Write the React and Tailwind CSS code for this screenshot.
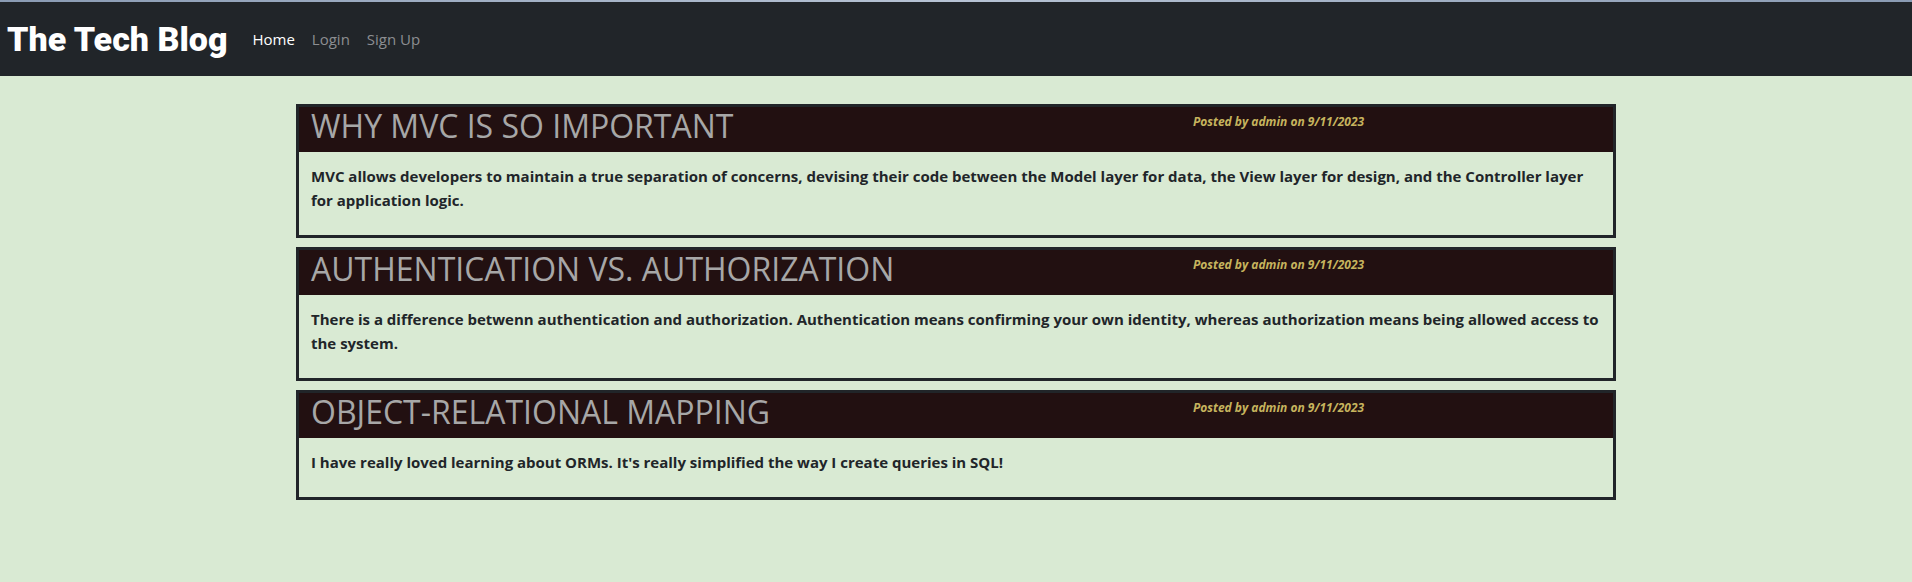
const posts = [
  {
    title: "WHY MVC IS SO IMPORTANT",
    body: "MVC allows developers to maintain a true separation of concerns, devising their code between the Model layer for data, the View layer for design, and the Controller layer for application logic.",
  },
  {
    title: "AUTHENTICATION VS. AUTHORIZATION",
    body: "There is a difference betwenn authentication and authorization. Authentication means confirming your own identity, whereas authorization means being allowed access to the system.",
  },
  {
    title: "OBJECT-RELATIONAL MAPPING",
    body: "I have really loved learning about ORMs. It's really simplified the way I create queries in SQL!",
  },
];

function PostCard({ title, body }) {
  return (
    <div className="border-[3px] border-[#212529] bg-[#d9ead3]">
      {/* Header */}
      <div className="flex items-start h-[45px] bg-[#221011]">
        <h2 className="w-[894px] px-3 text-[32px] leading-[38px] font-normal text-[#a7a7a7] font-['Open_Sans',sans-serif]">
          {title}
        </h2>
        <p className="pt-[6px] text-[12px] leading-[18px] font-bold italic text-[#c6b45e] font-['Open_Sans',sans-serif]">
          Posted by admin on 9/11/2023
        </p>
      </div>

      {/* Body */}
      <div className="px-3 pt-3 pb-[23px]">
        <p className="text-[15px] leading-6 font-bold text-[#212529] font-['Open_Sans',sans-serif]">
          {body}
        </p>
      </div>
    </div>
  );
}

export default function App() {
  return (
    <div className="min-h-[582px] bg-[#d9ead3]">
      <div className="h-[2px] bg-gradient-to-r from-[#8a9bb3] via-[#b7c3d4] to-[#8a9bb3]" />
      <nav className="flex items-center h-[74px] bg-[#212529] pl-[7px]">
        <a className="text-[34px] font-black text-white font-['Roboto',sans-serif] mr-[25px]">The Tech Blog</a>
        <div className="flex gap-[17px] text-[15px] font-['Open_Sans',sans-serif]">
          <a className="text-white">Home</a>
          <a className="text-[#8c8e91]">Login</a>
          <a className="text-[#8c8e91]">Sign Up</a>
        </div>
      </nav>

      <main className="w-[1320px] mx-auto mt-[28px] flex flex-col gap-[9px]">
        {posts.map((p) => (
          <PostCard key={p.title} {...p} />
        ))}
      </main>
    </div>
  );
}
